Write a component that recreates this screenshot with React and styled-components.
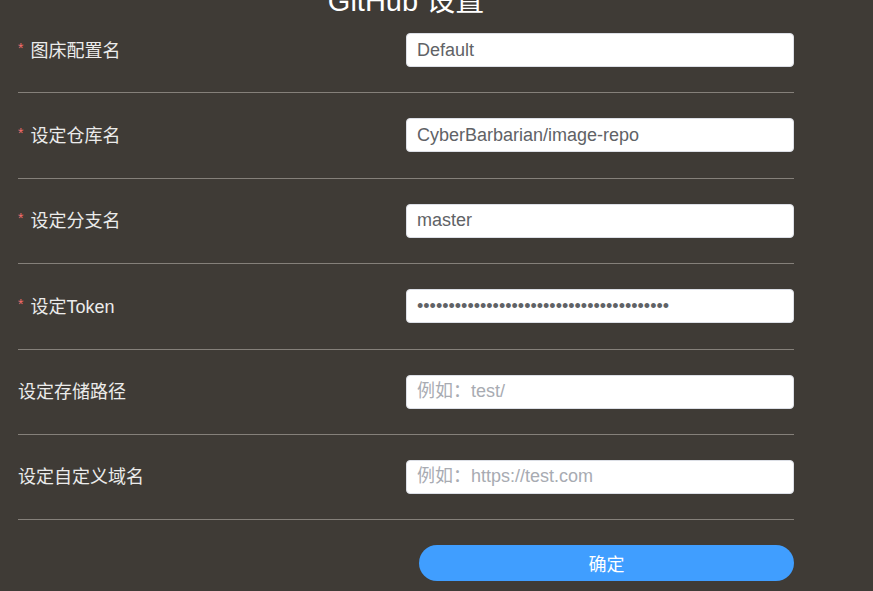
import React from 'react'
import styled, { createGlobalStyle } from 'styled-components'

const GlobalStyle = createGlobalStyle`
  html, body {
    margin: 0;
    padding: 0;
    background: #3f3b36;
    overflow: hidden;
  }
  body {
    font-family: "Liberation Sans", "Noto Sans CJK SC", sans-serif;
  }
`

const fields = [
  { label: '图床配置名', required: true, value: 'Default' },
  { label: '设定仓库名', required: true, value: 'CyberBarbarian/image-repo' },
  { label: '设定分支名', required: true, value: 'master' },
  { label: '设定Token', required: true, value: 'x'.repeat(40), type: 'password' },
  { label: '设定存储路径', placeholder: '例如：test/' },
  { label: '设定自定义域名', placeholder: '例如：https://test.com' },
]

const App = () => {
  return (
    <>
      <GlobalStyle />
      <Wrapper>
        <Title>GitHub 设置</Title>
        {fields.map((f) => (
          <React.Fragment key={f.label}>
            <Row>
              <Label>
                {f.required && <Star>*</Star>}
                {f.label}
              </Label>
              <Input
                type={f.type || 'text'}
                defaultValue={f.value}
                placeholder={f.placeholder}
              />
            </Row>
            <Divider />
          </React.Fragment>
        ))}
        <Footer>
          <Button>确定</Button>
        </Footer>
      </Wrapper>
    </>
  )
}

const Wrapper = styled.div`
  width: 776px;
  margin-left: 18px;
`

const Title = styled.h1`
  margin: -13px 0 18px;
  font-size: 29px;
  line-height: 28px;
  font-weight: normal;
  color: #ffffff;
  text-align: center;
`

const Row = styled.div`
  display: flex;
  align-items: center;
  justify-content: space-between;
  height: 34px;
`

const Label = styled.label`
  display: flex;
  align-items: center;
  font-size: 18px;
  color: #ebebeb;
  margin-top: -3px;
`

const Star = styled.span`
  color: #f56c6c;
  font-size: 14px;
  margin-right: 7px;
  margin-top: -2px;
`

const Input = styled.input`
  box-sizing: border-box;
  width: 388px;
  height: 34px;
  padding: 0 10px;
  border: 1px solid #dcdfe6;
  border-radius: 4px;
  background: #ffffff;
  font-family: "Liberation Sans", "Noto Sans CJK SC", sans-serif;
  font-size: 18px;
  color: #606266;
  outline: none;

  &::placeholder {
    color: #a8abb2;
  }
`

const Divider = styled.div`
  height: 1px;
  background: #85807a;
  margin: 25.4px 0 25px;
`

const Footer = styled.div`
  display: flex;
  justify-content: flex-end;
`

const Button = styled.button`
  width: 375px;
  height: 36px;
  border: none;
  border-radius: 18px;
  background: #409eff;
  color: #ffffff;
  font-family: "Liberation Sans", "Noto Sans CJK SC", sans-serif;
  font-size: 18px;
  cursor: pointer;
`

export default App
